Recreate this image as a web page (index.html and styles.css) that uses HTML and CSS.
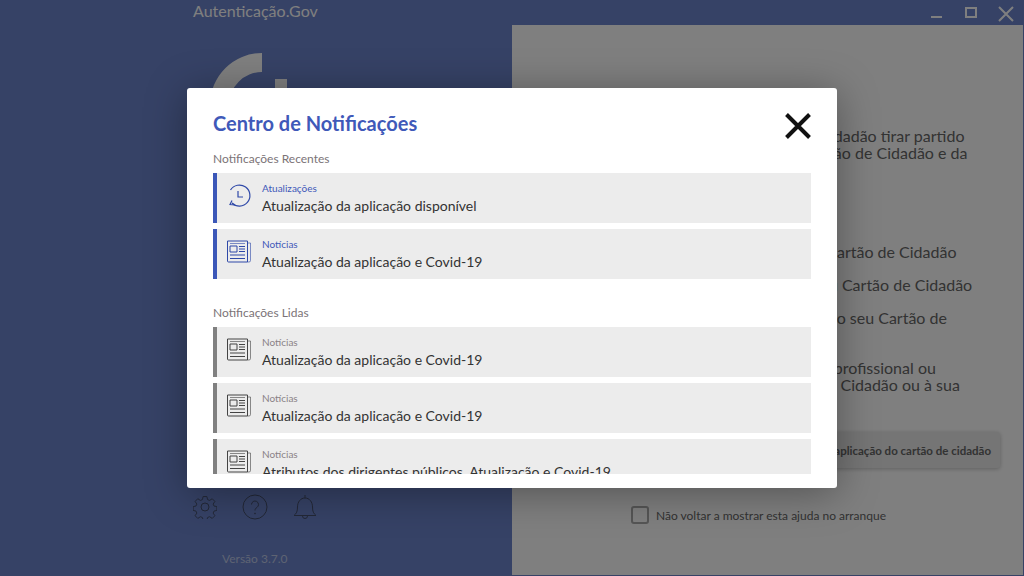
FILE: index.html
```html
<!DOCTYPE html>
<html lang="pt">
<head>
    <meta charset="UTF-8" />
    <title>Autenticação.Gov</title>
    <link rel="stylesheet" href="styles.css">
</head>
<body>

    <div class="window">
        <div class="sidebar">
            <div class="app-title">Autenticação.Gov</div>
            <svg class="logo" width="90" height="70" viewBox="0 0 90 70">
                <path d="M3 63A52 52 0 0 1 55 11V30A33 33 0 0 0 22 63Z" fill="#fff" />
                <rect x="68" y="37" width="12" height="26" fill="#fff" />
            </svg>
            <div class="side-icons">
                <svg width="24" height="24" viewBox="0 0 24 24" fill="none" stroke="currentColor" stroke-width="1">
                    <circle cx="12" cy="12" r="4" />
                    <path d="M10 1h4l.7 3.2 2.1.9 2.8-1.8 2.8 2.8-1.8 2.8.9 2.1 3 .6v4l-3 .7-.9 2.1 1.8 2.8-2.8 2.8-2.8-1.8-2.1.9-.7 2.9h-4l-.7-2.9-2.1-.9-2.8 1.8-2.8-2.8 1.8-2.8-.9-2.1-3-.7v-4l3-.6.9-2.1-1.8-2.8 2.8-2.8 2.8 1.8 2.100-.9z" transform="translate(.6 .6) scale(.95)" />
                </svg>
                <svg width="26" height="26" viewBox="0 0 26 26" fill="none" stroke="currentColor" stroke-width="1">
                    <circle cx="13" cy="13" r="12" />
                    <path d="M9.500 10.500a3.500 3.500 0 1 1 5.500 2.900c-1.300.9-2 1.500-2 3.100" />
                    <circle cx="13" cy="19.500" r=".5" />
                </svg>
                <svg class="bell" width="24" height="26" viewBox="0 0 24 26" fill="none" stroke="currentColor" stroke-width="1">
                    <path d="M1 21.500c2.500-2 3.500-4 3.500-8.500 0-5 3-9 7.500-9s7.500 4 7.500 9c0 4.500 1 6.500 3.500 8.500z" />
                    <path d="M12 4V1M9.500 22a2.500 2.500 0 0 0 5 0" />
                </svg>
            </div>
            <div class="version">Versão 3.7.0</div>
        </div>

        <div class="main">
            <div class="window-controls">
                <svg width="14" height="14" viewBox="0 0 14 14" stroke="#fff" stroke-width="2" fill="none"><path d="M1 11h11" /></svg>
                <svg width="14" height="14" viewBox="0 0 14 14" stroke="#fff" stroke-width="2" fill="none"><rect x="2" y="2" width="10" height="9" /></svg>
                <svg width="16" height="16" viewBox="0 0 16 16" stroke="#fff" stroke-width="2" fill="none"><path d="M1 1l14 14M15 1L1 15" /></svg>
            </div>
            <div class="help">
                <p class="help-text">O Autenticação.Gov permite ao Cartão de Cidadão tirar partido<br>de suas diversas funcionalidades do seu Cartão de Cidadão e da<br>Chave Móvel Digital.</p>
                <ul class="help-list">
                    <li>Consultar os dados pessoais e a morada do Cartão de Cidadão</li>
                    <li>&nbsp;&nbsp;Assinar documentos digitalmente com o seu Cartão de Cidadão</li>
                    <li>&nbsp;Alterar ou repor os códigos PIN associados ao seu Cartão de<br>Cidadão</li>
                    <li>Associar e validar um atributo ou certificado profissional ou<br>&nbsp;empresarial e de dirigentes ao seu Cartão de Cidadão ou à sua<br>Chave</li>
                </ul>
                <button class="help-button">Iniciar a aplicação do cartão de cidadão</button>
                <label class="help-check"><span class="checkbox"></span>Não voltar a mostrar esta ajuda no arranque</label>
            </div>
        </div>
    </div>

    <div class="overlay">
        <div class="modal">
            <div class="modal-head">
                <h1>Centro de Notificações</h1>
                <svg class="modal-close" width="28" height="28" viewBox="0 0 28 28" stroke="#111" stroke-width="4" fill="none"><path d="M2.500 2.500l23 23M25.500 2.500l-23 23" /></svg>
            </div>
            <div class="modal-list">
                <h2>Notificações Recentes</h2>
                <div class="notif notif-new">
                    <svg class="notif-icon" width="26" height="26" viewBox="0 0 26 26" fill="none" stroke="currentColor" stroke-width="1.200">
                        <path d="M4.500 8A10.500 10.500 0 1 1 6 21" />
                        <path d="M12 9v6h5" />
                        <path d="M6 18.500L4 22.500l5 .5" />
                    </svg>
                    <div><div class="notif-cat">Atualizações</div><div class="notif-title">Atualização da aplicação disponível</div></div>
                </div>
                <div class="notif notif-new">
                    <svg class="notif-icon" width="26" height="26" viewBox="0 0 26 26" fill="none" stroke="currentColor" stroke-width="1">
                        <path d="M1.500 3h20v21h-19a1 1 0 0 1-1-1z" />
                        <path d="M21.500 5h3v17.500a1.500 1.500 0 0 1-1.500 1.500h-1.500M4 5.500h15" opacity=".6" />
                        <path d="M4 8h7v6H4zM13 8.500h6M13 11h6M13 13.500h6M4 17h15M4 20.500h15" />
                    </svg>
                    <div><div class="notif-cat">Notícias</div><div class="notif-title">Atualização da aplicação e Covid-19</div></div>
                </div>

                <h2 class="read-head">Notificações Lidas</h2>
                <div class="notif">
                    <svg class="notif-icon" width="26" height="26" viewBox="0 0 26 26" fill="none" stroke="currentColor" stroke-width="1">
                        <path d="M1.500 3h20v21h-19a1 1 0 0 1-1-1z" />
                        <path d="M21.500 5h3v17.500a1.500 1.500 0 0 1-1.500 1.500h-1.500M4 5.500h15" opacity=".6" />
                        <path d="M4 8h7v6H4zM13 8.500h6M13 11h6M13 13.500h6M4 17h15M4 20.500h15" />
                    </svg>
                    <div><div class="notif-cat">Notícias</div><div class="notif-title">Atualização da aplicação e Covid-19</div></div>
                </div>
                <div class="notif">
                    <svg class="notif-icon" width="26" height="26" viewBox="0 0 26 26" fill="none" stroke="currentColor" stroke-width="1">
                        <path d="M1.500 3h20v21h-19a1 1 0 0 1-1-1z" />
                        <path d="M21.500 5h3v17.500a1.500 1.500 0 0 1-1.500 1.500h-1.500M4 5.500h15" opacity=".6" />
                        <path d="M4 8h7v6H4zM13 8.500h6M13 11h6M13 13.500h6M4 17h15M4 20.500h15" />
                    </svg>
                    <div><div class="notif-cat">Notícias</div><div class="notif-title">Atualização da aplicação e Covid-19</div></div>
                </div>
                <div class="notif">
                    <svg class="notif-icon" width="26" height="26" viewBox="0 0 26 26" fill="none" stroke="currentColor" stroke-width="1">
                        <path d="M1.500 3h20v21h-19a1 1 0 0 1-1-1z" />
                        <path d="M21.500 5h3v17.500a1.500 1.500 0 0 1-1.500 1.500h-1.500M4 5.500h15" opacity=".6" />
                        <path d="M4 8h7v6H4zM13 8.500h6M13 11h6M13 13.500h6M4 17h15M4 20.500h15" />
                    </svg>
                    <div><div class="notif-cat">Notícias</div><div class="notif-title">Atributos dos dirigentes públicos, Atualização e Covid-19</div></div>
                </div>
            </div>
        </div>
    </div>

</body>
</html>
```

FILE: styles.css
```css
* {
    box-sizing: border-box;
}

body {
    margin: 0;
    width: 1024px;
    height: 576px;
    overflow: hidden;
    font-family: 'Lato', 'Liberation Sans', sans-serif;
    background: #6c84cc;
}

.window {
    display: flex;
    height: 576px;
}

.sidebar {
    width: 512px;
    flex: none;
    padding-left: 193px;
    display: flex;
    flex-direction: column;
}

.app-title {
    height: 25px;
    font-size: 16px;
    line-height: 22px;
    color: #fff;
}

.logo {
    display: block;
    margin-top: 17px;
    margin-left: 14px;
}

.side-icons {
    display: flex;
    align-items: center;
    gap: 25px;
    margin-top: auto;
    color: #46506e;
}

.version {
    margin-top: 31px;
    margin-bottom: 10px;
    margin-left: 29px;
    font-size: 12px;
    line-height: 15px;
    color: #bcc7e6;
}

.main {
    flex: 1;
    display: flex;
    flex-direction: column;
    padding: 0 1px 1px 0;
}

.window-controls {
    height: 25px;
    display: flex;
    justify-content: flex-end;
    align-items: flex-start;
    gap: 20px;
    padding: 6px 9px 0 0;
}

.help {
    flex: 1;
    background: #fff;
    padding: 102px 0 0 10px;
    color: #666;
    font-size: 16px;
    line-height: 17px;
    white-space: nowrap;
}

.help-text {
    margin: 0;
}

.help-list {
    list-style: none;
    margin: 65px 0 0;
    padding: 0;
}

.help-list li {
    margin-bottom: 16px;
}

.help-button {
    display: block;
    margin-top: 22px;
    width: 478px;
    height: 36px;
    border: none;
    border-radius: 3px;
    background: #ebebeb;
    box-shadow: 0 1px 4px rgba(0,0,0,0.25);
    font-family: inherit;
    font-size: 11.500px;
    font-weight: bold;
    color: #666;
    text-align: right;
    padding-right: 9px;
}

.help-check {
    display: flex;
    align-items: center;
    gap: 7px;
    margin-top: 38px;
    margin-left: 109px;
    font-size: 12px;
}

.checkbox {
    width: 18px;
    height: 18px;
    border: 2px solid #aaa;
    border-radius: 3px;
}

.overlay {
    position: absolute;
    inset: 0;
    background: rgba(0,0,0,0.5);
    display: flex;
    align-items: center;
    justify-content: center;
}

.modal {
    width: 650px;
    height: 400px;
    background: white;
    border-radius: 3px;
    box-shadow: 0 5px 40px rgba(0,0,0,0.35);
    padding: 23px 26px 14px;
    display: flex;
    flex-direction: column;
}

.modal-head {
    display: flex;
    justify-content: space-between;
    align-items: flex-start;
    height: 40px;
}

h1 {
    margin: 0;
    font-size: 20px;
    line-height: 24px;
    font-weight: bold;
    color: #3f59b9;
}

.modal-close {
    margin-top: 1px;
    margin-right: -1px;
}

.modal-list {
    flex: 1;
    overflow: hidden;
}

h2 {
    margin: 0 0 7px;
    font-size: 12px;
    line-height: 15px;
    font-weight: normal;
    color: #7b7377;
}

.read-head {
    margin-top: 26px;
}

.notif {
    display: flex;
    align-items: flex-start;
    gap: 10px;
    height: 50px;
    margin-bottom: 6px;
    padding: 9px 0 0 9px;
    background: #ececec;
    border-left: 4px solid #808080;
    color: #444;
}

.notif-new {
    border-left-color: #3b57b8;
    color: #2f49a8;
}

.notif-icon {
    flex: none;
}

.notif-cat {
    font-size: 10px;
    line-height: 12px;
    color: #8a8286;
}

.notif-new .notif-cat {
    color: #3f59b9;
}

.notif-title {
    margin-top: 2px;
    font-size: 14px;
    line-height: 20px;
    color: #333;
}
```
